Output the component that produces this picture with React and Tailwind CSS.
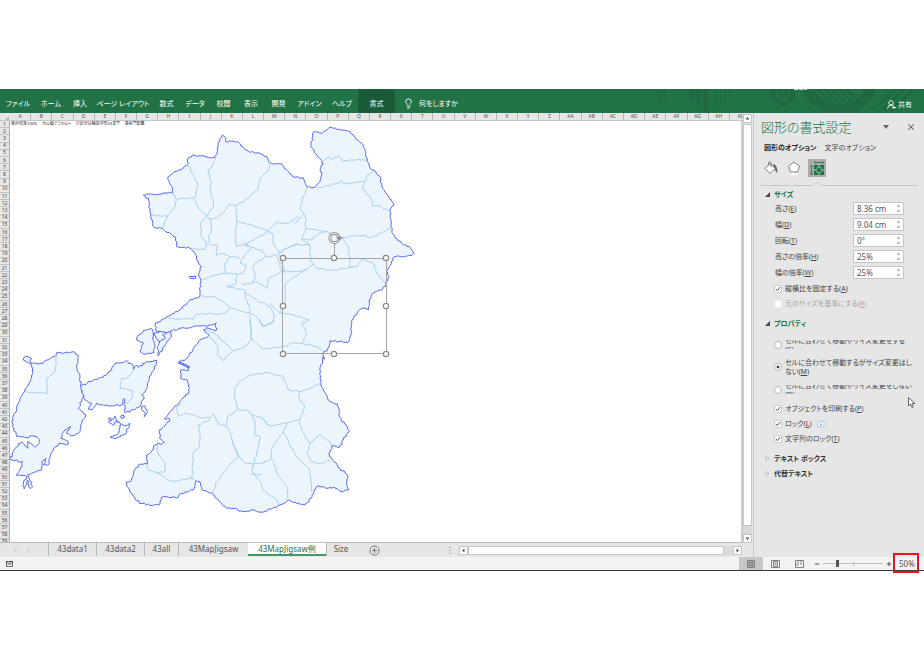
import { Minus, Plus, X, Lightbulb } from 'lucide-react';

const menus = [
    { label: 'ファイル', width: 'w-[36px]' },
    { label: 'ホーム', width: 'w-[30px]' },
    { label: '挿入', width: 'w-[28px]' },
    { label: 'ページ レイアウト', width: 'w-[58px]' },
    { label: '数式', width: 'w-[29px]' },
    { label: 'データ', width: 'w-[28px]' },
    { label: '校閲', width: 'w-[29px]' },
    { label: '表示', width: 'w-[26px]' },
    { label: '開発', width: 'w-[29px]' },
    { label: 'アドイン', width: 'w-[33px]' },
    { label: 'ヘルプ', width: 'w-[32px]' },
    { label: '書式', width: 'w-[37px]', active: true },
];

const sheets = [
    { label: '43data1', width: 'w-[48px]' },
    { label: '43data2', width: 'w-[48px]' },
    { label: '43all', width: 'w-[34px]' },
    { label: '43MapJigsaw', width: 'w-[70px]' },
    { label: '43MapJigsaw例', width: 'w-[78px]', active: true },
    { label: 'Size', width: 'w-[29px]' },
];

const sizes = [
    { id: 'height', label: '高さ', mnemonic: 'E', value: '8.36 cm' },
    { id: 'width', label: '幅', mnemonic: 'D', value: '9.04 cm' },
    { id: 'rotate', label: '回転', mnemonic: 'T', value: '0°' },
    { id: 'scaleHeight', label: '高さの倍率', mnemonic: 'H', value: '25%' },
    { id: 'scaleWidth', label: '幅の倍率', mnemonic: 'W', value: '25%' },
];

const columns = Array.from({ length: 35 }, (_, i) =>
    i < 26 ? String.fromCharCode(65 + i) : 'A' + String.fromCharCode(39 + i)
);
const rows = Array.from({ length: 59 }, (_, i) => i + 1);

// Map outlines, three units to a pixel
const mainland = '667,405 678,415 677,425 712,425 730,442 748,456 775,458 802,474 812,489 845,490 858,508 878,530 910,533 922,562 945,562 960,545 965,525 960,510 970,492 950,465 932,440 938,410 942,395 965,400 990,382 1030,390 1050,395 1068,418 1090,435 1098,460 1102,485 1110,505 1122,510 1140,530 1148,565 1160,582 1175,600 1182,615 1170,630 1173,660 1176,690 1185,712 1205,730 1228,740 1242,760 1235,766 1182,770 1175,790 1160,815 1168,830 1158,852 1145,870 1122,878 1108,900 1105,930 1085,925 1072,938 1055,962 1053,1005 1042,1028 990,1022 982,1052 967,1060 973,1078 970,1070 960,1110 962,1150 970,1172 990,1205 1013,1212 1018,1250 1035,1272 1048,1292 1030,1320 1018,1342 995,1338 988,1365 1002,1385 1020,1405 1042,1425 1040,1450 1046,1470 1030,1475 1000,1462 978,1465 955,1458 942,1475 927,1505 915,1515 890,1510 865,1500 840,1515 818,1525 790,1536 760,1530 725,1533 700,1525 680,1525 660,1505 640,1485 635,1478 610,1472 600,1445 588,1442 580,1470 540,1482 535,1492 485,1492 480,1512 450,1516 418,1510 395,1480 380,1455 378,1447 392,1445 400,1420 418,1392 442,1392 440,1365 450,1360 465,1335 493,1328 478,1315 478,1290 490,1282 510,1258 493,1256 520,1225 545,1198 568,1175 562,1140 542,1135 542,1110 565,1112 568,1102 534,1088 560,1075 580,1045 600,1020 628,1005 610,990 620,982 640,990 648,992 648,968 635,975 600,978 540,985 500,1000 470,995 465,975 500,950 540,930 565,905 600,888 602,840 595,825 605,800 590,780 585,760 570,745 530,740 528,712 490,688 460,680 452,650 445,595 430,585 518,578 515,560 503,535 520,518 538,510 562,495 562,480 577,465 615,470 645,472 652,445 658,420 667,405';

const islands = [
    '92,162 120,160 165,140 170,128 190,130 225,127 235,140 230,165 240,200 242,225 250,258 235,295 258,315 245,340 240,365 215,378 200,370 213,350 195,360 182,385 205,395 200,405 180,400 160,420 150,440 147,462 130,465 138,445 125,455 125,480 95,490 82,495 98,530 90,535 83,510 72,537 70,515 80,500 60,495 48,495 60,480 68,455 30,448 45,415 65,395 85,415 82,395 105,412 118,395 110,380 90,378 85,385 50,380 38,350 37,325 50,300 60,265 75,240 95,205 98,180 92,162',
    '92,162 82,158 70,150 72,142 85,140 95,145 90,152 92,162',
    '242,230 280,210 318,195 345,160 370,158 380,152 398,165 400,178 410,165 415,172 440,155 470,152 462,180 448,205 440,235 425,255 432,260 420,290 400,300 375,308 372,265 365,285 330,288 290,280 275,300 265,298 275,280 255,270 242,230',
    '410,90 415,75 430,62 455,55 463,70 458,90 465,110 462,128 430,132 420,125 430,98 410,90',
    '458,72 468,68 480,65 510,65 515,80 500,98 490,110 475,138 472,110 480,95 468,85 458,72',
    '480,95 495,85 488,75 500,70',
    '325,325 340,328 345,318 350,330 362,340 345,336 340,347 325,335 335,332 325,325',
    '360,345 375,347 390,340 388,350 370,375 350,385 330,382 355,370 360,345',
    '425,290 435,288 442,308 432,320 434,308 425,300 425,290',
    '362,318 370,315 374,322 366,327 362,318',
];

const borders = [
    {
        at: 'translate(390 360)', lines: [
            '175,137 190,165 203,195 195,235',
            '128,218 140,238 190,233 205,265 230,287 212,310 215,350 232,375 225,388 182,384',
            '140,238 135,260 112,290 97,325',
            '65,285 90,288 112,290',
            '255,112 250,135 235,150 242,180 240,215 250,240 250,262 230,287',
            '422,129 415,150 390,175 385,205 355,235 318,258 300,252 285,270 262,295 240,297 230,287',
            '240,297 245,330 235,350 238,372 262,375 258,405 280,400 300,410 330,415',
            '318,258 320,310 315,340 320,380 340,375 365,382 400,395 408,410',
            '320,303 345,310 380,320 412,332 440,308 475,310 505,290',
            '412,332 400,345 370,360 345,372 355,378 340,366',
            '412,332 430,345 430,370 445,395 505,370',
            '365,385 345,405 330,430 348,435 340,460 320,465 318,492 290,500 335,508 345,510',
            '300,410 285,430 287,460 250,467 212,482',
            '287,460 320,462',
            '408,410 370,435 375,475 365,490 335,495',
            '408,410 440,405 450,430 455,455 415,475 412,505 380,485 365,490',
            '345,510 345,535 358,555 360,600 365,660',
            '212,528 250,530 280,545 300,560 330,572 360,578 380,590 400,620 430,605 435,585 420,560 380,540 345,515',
            '115,595 190,598 200,582 285,580 303,562',
        ],
    },
    {
        at: 'translate(810 360)', lines: [
            '158,125 175,110 185,118 208,108 215,122 290,120',
            '140,205 200,190 215,183 222,192 285,183 292,165 312,152',
            '285,183 275,205 300,230 308,258 330,258 340,268 360,268',
            '112,202 100,230 90,265 105,285 108,325 95,358 120,375 122,420 140,445 200,452 215,445 240,443',
            '75,310 100,285',
            '108,325 130,328 165,335 215,352 285,345 300,355 330,340 362,325',
            '95,358 125,360 130,350 165,335',
            '215,352 235,380 240,443 262,440 275,418 310,430 320,460 345,487',
            '120,375 75,375 25,400 35,430 45,460',
            '130,432 100,455 45,490 45,545 30,580',
            '35,455 80,455 110,450',
            '0,550 30,580 70,585 118,600 95,610 110,640 95,670',
        ],
    },
    {
        at: 'translate(330 960)', lines: [
            '280,25 320,45 340,65 370,90 340,122 322,100 325,80 290,40',
            '370,92 400,85 425,55 422,0',
            '425,55 460,88 530,78 545,68 600,75 625,80 640,95',
            '450,0 460,18 485,10 490,0',
            '390,185 420,165 470,158 520,170 535,210 570,215 568,235 583,260 570,300 520,310 480,318 455,295 425,283 415,272 385,268 375,235 375,205 390,185',
            '570,215 600,205 632,190',
            '215,240 200,265 205,290 225,278 270,293 300,293 310,282 325,312 348,320 352,290 385,268',
            '300,300 265,315 270,350 265,385 250,400 245,475 185,485 140,458',
            '140,375 145,405 165,425 165,455 140,458 115,450 112,432',
            '245,475 260,485',
            '348,320 365,350 370,375 385,410 350,445 320,485 308,520',
            '425,283 435,310 435,345 450,350 440,400 430,433 405,430 385,405 370,370',
            '430,433 425,463 455,463',
            '430,433 455,430 485,415 505,465 535,505 530,540',
            '430,463 455,490 458,510 500,540 505,555',
            '485,415 485,385 520,335 530,310',
            '520,335 540,375 560,410 600,450 605,515',
            '568,305 580,340 600,370 590,400 605,425 630,432 660,420',
            '600,370 630,345 660,365 665,378',
        ],
    },
    {
        at: 'translate(0 930)', lines: [
            '170,135 165,185 140,205 143,250 75,245',
            '405,175 380,205 365,205 360,235 395,240 398,262 380,285',
        ],
    },
];

// Breaks straight segments into short uneven steps so they read as a coastline
const rough = (line, amount) => {
    const points = line.split(' ').map((p) => p.split(',').map(Number));
    let seed = points[0][0] + points[0][1];
    const noise = () => {
        seed = (seed * 9301 + 49297) % 233280;
        return (seed / 233280 - 0.5) * 2 * amount;
    };
    const out = [points[0]];
    for (let i = 1; i < points.length; i++) {
        const [x0, y0] = points[i - 1];
        const [x1, y1] = points[i];
        const steps = Math.max(1, Math.round(Math.hypot(x1 - x0, y1 - y0) / 6));
        for (let s = 1; s < steps; s++) {
            out.push([x0 + ((x1 - x0) * s) / steps + noise(), y0 + ((y1 - y0) * s) / steps + noise()]);
        }
        out.push([x1, y1]);
    }
    return out.map(([x, y]) => `${x.toFixed(1)},${y.toFixed(1)}`).join(' ');
};

const handles = [[283, 258], [334, 258], [386, 258], [283, 306], [386, 306], [283, 354], [334, 354], [386, 354]];

const MapShapes = () => (
    <svg className="absolute top-0 left-0 w-[731px] h-[422px]" viewBox="10 121 731 422">
        <g transform="scale(0.33333)" strokeLinejoin="round">
            <g fill="#edf5fc" stroke="#5467f2" strokeWidth="3">
                <polyline points={rough(mainland, 2.8)} />
                <polyline points="568,830 588,829 586,836 571,835 568,830" />
                <g transform="translate(0 930)">
                    {islands.map((line) => <polyline key={line} points={rough(line, 2.8)} />)}
                </g>
                <path d="M534 1088l33 17M537 1084l33 17" />
            </g>
            <g fill="none" stroke="#9fc7ea" strokeWidth="2.6">
                {borders.map((group) => (
                    <g key={group.at} transform={group.at}>
                        {group.lines.map((line) => <polyline key={line} points={rough(line, 2.2)} />)}
                    </g>
                ))}
            </g>
        </g>
        <path d="M283 258.500H386.500V353.500H282.500V258.500M334.500 258V242" fill="none" stroke="#a6a6a6" />
        {handles.map(([x, y]) => (
            <circle key={`${x}-${y}`} cx={x} cy={y} r="2.700" fill="#fff" stroke="#8a8a8a" strokeWidth="1.200" />
        ))}
        <circle cx="334.500" cy="238" r="4.600" fill="none" stroke="#8f8f8f" strokeWidth="3" />
        <circle cx="334.500" cy="238" r="4.600" fill="none" stroke="#fff" strokeWidth="1" />
        <path d="M336 237h7l-3.500 3.500z" fill="#8f8f8f" />
    </svg>
);

const RibbonArt = () => (
    <svg className="absolute top-0 right-0 w-[280px] h-[24px]" viewBox="644 89 280 24" fill="none" stroke="#1f6840">
        <path d="M653.500 89v6M656.500 89v9M660.500 89v17M664.500 89v9" strokeWidth="1.500" />
        <path d="M692 89v12M698 89v15M706 89v24" strokeWidth="5" />
        <path d="M716.500 89v20M720.500 89v16M724.500 89v13M728.500 89v9M731.500 89v6" strokeWidth="1" />
        <circle cx="783" cy="93" r="10" strokeWidth="5" />
        <circle cx="783" cy="93" r="3.500" strokeWidth="3" />
        <path d="M808 89a34 34 0 0 0 63 0" strokeWidth="10" />
        <path d="M818 89l22 22M825 89l19 19M832 89l16 16M839 89l13 13M846 89l8 8" strokeWidth="2" />
        <path d="M878 106l17-17M884 109l20-20M891 111l22-22" strokeWidth="3" />
        <path d="M794 89.500h13" stroke="#d8cfd0" strokeDasharray="4 1" />
    </svg>
);

const Section = ({ title, open, className }) => (
    <button className={`flex items-center h-[13px] pl-[4px] gap-[4px] text-[7px] font-bold ${open ? 'text-[#217346]' : 'text-[#333]'} ${className}`}>
        <svg className="w-[5px] h-[5px]" viewBox="0 0 5 5">
            {open ? <path d="M5 0v5H0z" fill="#444" /> : <path d="M1 0.500l3 2-3 2z" fill="#fff" stroke="#999" strokeWidth="0.600" />}
        </svg>
        {title}
    </button>
);

const Check = ({ label, mnemonic, checked, disabled, children }) => (
    <div className="flex items-center h-[13px] mt-[2px] pl-[13px]">
        <label className={`relative flex items-center gap-[3px] ${disabled ? 'text-[#a8a8a8]' : ''}`}>
            <input type="checkbox" defaultChecked={checked} disabled={disabled}
                className="peer appearance-none w-[8px] h-[8px] bg-white border border-[#cfcfcf] disabled:border-[#ececec]" />
            <svg className="hidden peer-checked:block absolute left-0 w-[8px] h-[8px] pointer-events-none" viewBox="0 0 8 8">
                <path d="M2 4l1.500 1.700L6.200 2" fill="none" stroke="#555" />
            </svg>
            <span>{label}(<u>{mnemonic}</u>)</span>
        </label>
        {children}
    </div>
);

const Move = ({ children, checked, clipped }) => (
    <label className={`flex items-center gap-[3px] mt-[9px] pl-[13px] ${clipped ? 'h-[9px]' : 'h-[18px]'}`}>
        <input type="radio" name="move" defaultChecked={checked}
            className="appearance-none shrink-0 w-[8px] h-[8px] rounded-full bg-white border border-[#b5b5b5] checked:bg-[radial-gradient(#444_30%,#fff_40%)]" />
        <span className="flex items-center h-full overflow-hidden leading-[9px] whitespace-nowrap">
            <span>{children}</span>
        </span>
    </label>
);

const FormatPanel = () => (
    <aside className="relative shrink-0 w-[171px] pl-[7px] bg-[#e6e6e6] border-l border-[#c6c6c6] text-[7px] text-[#444]">
        <div className="flex items-center h-[28px]">
            <h2 className="flex-1 text-[13px] text-[#217346] font-light whitespace-nowrap">図形の書式設定</h2>
            <button aria-label="オプション" className="mr-[17px]">
                <svg className="w-[6px] h-[4px]" viewBox="0 0 6 4"><path d="M0 0h6L3 4z" fill="#666" /></svg>
            </button>
            <button aria-label="閉じる" className="mr-[8px] text-[#666]"><X size={10} strokeWidth={2.5} /></button>
        </div>
        <div className="flex items-center h-[13px] pl-[3px] gap-[8px] whitespace-nowrap">
            <button className="font-bold text-[#262626]">図形のオプション</button>
            <button>文字のオプション</button>
        </div>
        <div className="flex mt-[5px] h-[18px] pl-px gap-[5px]">
            <button aria-label="塗りつぶしと線" className="w-[18px]">
                <svg className="w-[18px] h-[18px]" viewBox="0 0 18 18">
                    <path d="M3 9.500l5-5 5 5-5 5z" fill="#fff" stroke="#777" />
                    <path d="M6.500 6V3.500q1.500-2 2.500 0V8" fill="none" stroke="#777" />
                    <path d="M10.500 5q5 0 5 9-2.500-1-2.500-4.500z" fill="#666" />
                </svg>
            </button>
            <button aria-label="効果" className="w-[18px]">
                <svg className="w-[18px] h-[18px]" viewBox="0 0 18 18">
                    <path d="M9 3l5.500 4-2 6h-7l-2-6z" fill="#fff" stroke="#888" />
                    <path d="M5.500 15h7" stroke="#fff" strokeWidth="1.500" />
                </svg>
            </button>
            <button aria-label="サイズとプロパティ" className="w-[18px] bg-[#ababab]">
                <svg className="w-[18px] h-[18px]" viewBox="0 0 18 18">
                    <path d="M6 6h10v10H6z" fill="#217346" />
                    <path d="M11 6v3M11 13v3M6 11h3M13 11h3" stroke="#c5d8cc" />
                    <path d="M9 8.500v1M13 8.500v1M9 12.500v1M13 12.500v1" stroke="#fff" />
                    <path d="M7 3.500h8M7 2v3M15 2v3M3.500 7v8M2 7h3M2 15h3" fill="none" stroke="#217346" strokeWidth="0.800" />
                </svg>
            </button>
        </div>
        <svg className="block w-[157px] h-[9px]" viewBox="0 0 157 9">
            <path d="M0 8.500h52l4-4 4 4h97" fill="none" stroke="#c4c4c4" />
        </svg>

        <Section title="サイズ" open className="mt-[2px]" />
        <div className="mt-px mb-[3px] pl-[14px] pr-[20px] flex flex-col gap-[3px]">
            {sizes.map((data) => (
                <div key={data.id} className="flex items-center justify-between h-[13px]">
                    <label htmlFor={data.id}>{data.label}(<u>{data.mnemonic}</u>)</label>
                    <div className="flex items-center w-[51px] h-[13px] bg-white border border-[#c6c6c6]">
                        <input id={data.id} defaultValue={data.value} className="w-[42px] h-full pl-[3px] text-[8px] text-[#555] outline-none" />
                        <svg className="w-[5px] h-[9px]" viewBox="0 0 5 9">
                            <path d="M1 2.500L2.500 1 4 2.500zM1 6.500L2.500 8 4 6.500z" fill="#666" />
                        </svg>
                    </div>
                </div>
            ))}
        </div>
        <Check label="縦横比を固定する" mnemonic="A" checked />
        <Check label="元のサイズを基準にする" mnemonic="R" disabled />

        <Section title="プロパティ" open className="mt-[7px] mb-[10px]" />
        <Move clipped>セルに合わせて移動やサイズ変更をする<br />(<u>C</u>)</Move>
        <Move checked>セルに合わせて移動するがサイズ変更はし<br />ない(<u>M</u>)</Move>
        <Move clipped>セルに合わせて移動やサイズ変更をしない<br />(<u>D</u>)</Move>
        <div className="mt-[8px]">
            <Check label="オブジェクトを印刷する" mnemonic="P" checked />
            <Check label="ロック" mnemonic="L" checked>
                <svg className="ml-[5px] w-[8px] h-[8px]" viewBox="0 0 8 8">
                    <circle cx="4" cy="4" r="3.400" fill="#fff" stroke="#8db8e0" strokeWidth="0.800" />
                    <path d="M4 3.500v2.500M4 2v0.800" stroke="#3f87cc" />
                </svg>
            </Check>
            <Check label="文字列のロック" mnemonic="T" checked />
        </div>
        <Section title="テキスト ボックス" className="mt-[7px]" />
        <Section title="代替テキスト" className="mt-[2px]" />

        <svg className="absolute left-[154px] top-[284px] w-[8px] h-[11px]" viewBox="0 0 8 11">
            <path d="M0.500 0.500v8.500l2-2 1.500 3.500 1.300-0.600L4 6.500h3z" fill="#fff" stroke="#444" strokeWidth="0.800" />
        </svg>
    </aside>
);

const Arrow = ({ d, label }) => (
    <button aria-label={label} className="shrink-0 flex items-center justify-center w-[9px] h-[9px] bg-white border border-[#c6c6c6]">
        <svg className="w-[5px] h-[5px]" viewBox="0 0 5 5"><path d={d} fill="#555" /></svg>
    </button>
);

const App = () => {
    return (
        <div className="min-h-screen bg-white py-[89px] leading-none font-['Noto_Sans','Noto_Sans_CJK_JP',sans-serif] [font-feature-settings:'palt']">
            {/* RIBBON */}
            <header className="relative flex h-[24px] bg-[#217346] text-white text-[7px] overflow-hidden">
                <RibbonArt />
                <nav className="flex">
                    {menus.map((menu) => (
                        <button key={menu.label}
                            className={`pt-[5px] whitespace-nowrap ${menu.width} ${menu.active ? 'bg-[#1b5c38]' : ''}`}>
                            {menu.label}
                        </button>
                    ))}
                </nav>
                <button className="flex items-center gap-[5px] pt-[5px] pl-[8px] whitespace-nowrap">
                    <Lightbulb size={11} strokeWidth={2} />
                    何をしますか
                </button>
                <button className="relative flex items-center gap-[2px] pt-[6px] ml-auto mr-[12px]">
                    <svg className="w-[9px] h-[9px]" viewBox="0 0 9 9" fill="none" stroke="#fff" strokeWidth="0.900">
                        <circle cx="4" cy="2.800" r="2.200" />
                        <path d="M0.500 8.500q0.300-3.300 3.500-3.300 1.200 0 2 0.600M5 7.500h4M7 5.500v3.500" />
                    </svg>
                    共有
                </button>
            </header>

            <div className="flex">
                <main className="flex-1 min-w-0 bg-[#e6e6e6]">
                    <div className="flex">
                        {/* GRID */}
                        <div className="flex-1 min-w-0 overflow-hidden">
                            <div className="flex h-[8px] bg-[#e6e6e6] border-b border-[#c6c6c6] text-[5px] text-[#555]">
                                <div className="shrink-0 w-[10px] flex justify-end items-end pr-px">
                                    <svg className="w-[4px] h-[4px]" viewBox="0 0 4 4"><path d="M4 0v4H0z" fill="#b8b8b8" /></svg>
                                </div>
                                <div className="shrink-0 flex w-[741px]">
                                    {columns.map((column) => (
                                        <div key={column} className="flex-1 flex items-center justify-center border-r border-[#b8b8b8]">{column}</div>
                                    ))}
                                </div>
                            </div>
                            <div className="flex h-[422px] overflow-hidden border-b border-[#bdbdbd]">
                                <div className="shrink-0 flex flex-col w-[10px] h-[425px] bg-[#e6e6e6] border-r border-[#b0b0b0] text-[5px] text-[#444]">
                                    {rows.map((row) => (
                                        <div key={row} className="flex-1 min-h-0 flex items-center justify-center border-b border-[#c2c2c2]">{row}</div>
                                    ))}
                                </div>
                                <div className="relative flex-1 bg-white overflow-hidden border-r-2 border-[#cdcdcd]">
                                    <p className="pt-px pl-px text-[4px] text-[#222] whitespace-nowrap">
                                        表示倍率100%　 セル幅デフォルト　 行区分は縮放字形03まで　 事前で配置
                                    </p>
                                    <MapShapes />
                                </div>
                            </div>
                        </div>
                        <div className="shrink-0 flex flex-col w-[10px] pt-px">
                            <Arrow label="上へ" d="M0.500 3.500h4l-2-2.500z" />
                            <div className="flex-1 w-[9px] mt-px pb-[8px] bg-[#d9d9d9]">
                                <div className="h-full bg-white border border-[#c6c6c6]" />
                            </div>
                            <Arrow label="下へ" d="M0.500 1.500h4l-2 2.500z" />
                        </div>
                    </div>

                    {/* SHEET TABS */}
                    <div className="flex h-[14px] text-[8px] text-[#555]">
                        <div className="flex items-center justify-center gap-[10px] w-[48px] pr-[4px] text-[#b5b5b5]">
                            <span>‹</span>
                            <span>›</span>
                        </div>
                        {sheets.map((sheet) => (
                            <button key={sheet.label}
                                className={`h-[13px] whitespace-nowrap ${sheet.width} ${sheet.active ? 'bg-white text-[#217346] border-b-2 border-[#3f9a68]' : 'pb-[2px] border-l border-[#b8b8b8]'}`}>
                                {sheet.label}
                            </button>
                        ))}
                        <button aria-label="新しいシート" className="pl-[14px]">
                            <svg className="w-[11px] h-[11px]" viewBox="0 0 11 11" fill="none" stroke="#777">
                                <circle cx="5.500" cy="5.500" r="4.500" />
                                <path d="M5.500 3v5M3 5.500h5" />
                            </svg>
                        </button>
                        <div className="flex flex-1 items-center justify-end pr-[11px]">
                            <svg className="mr-[8px] w-[2px] h-[7px]" viewBox="0 0 2 7">
                                <path d="M1 0v7" stroke="#999" strokeWidth="1.500" strokeDasharray="1 2" />
                            </svg>
                            <Arrow label="左へ" d="M3.500 0.500v4L1 2.500z" />
                            <div className="w-[265px] h-[9px] pr-[9px] bg-[#d9d9d9]">
                                <div className="h-full bg-white border border-[#c6c6c6]" />
                            </div>
                            <Arrow label="右へ" d="M1.500 0.500v4L4 2.500z" />
                        </div>
                    </div>
                </main>

                <FormatPanel />
            </div>

            {/* STATUS BAR */}
            <footer className="flex items-center h-[14px] bg-[#f3f3f3] border-b border-[#3a3a44] text-[#555]">
                <svg className="ml-[6px] w-[7px] h-[7px]" viewBox="0 0 7 7">
                    <path d="M0.500 2v4.500h6V2z" fill="#fff" stroke="#555" strokeWidth="0.900" />
                    <path d="M0 1.500h2M3 1.500h4M1.500 4h4" stroke="#444" strokeWidth="1.200" />
                </svg>
                <button aria-label="標準" className="flex items-center justify-center w-[24px] h-full ml-auto bg-[#c6c6c6]">
                    <svg className="w-[8px] h-[8px]" viewBox="0 0 8 8" fill="none" stroke="#777" strokeWidth="0.900">
                        <path d="M0.500 0.500h7v7h-7zM0.500 2.800h7M0.500 5.200h7M2.800 0.500v7M5.200 0.500v7" />
                    </svg>
                </button>
                <button aria-label="ページ レイアウト" className="flex items-center justify-center w-[24px] h-full">
                    <svg className="w-[9px] h-[8px]" viewBox="0 0 9 8" fill="none" stroke="#777" strokeWidth="0.900">
                        <path d="M0.500 0.500h8v7h-8zM2.500 1.500h4v5h-4zM3.500 3h2M3.500 4.500h2" />
                    </svg>
                </button>
                <button aria-label="改ページ プレビュー" className="flex items-center justify-center w-[24px] h-full">
                    <svg className="w-[9px] h-[8px]" viewBox="0 0 9 8" fill="none" stroke="#777" strokeWidth="0.900">
                        <path d="M0.500 0.500h8v7h-8zM3 0.500v4.500M6 0.500v4.500M3 5h-2.500" />
                    </svg>
                </button>
                <button aria-label="縮小" className="ml-[3px]"><Minus size={6} strokeWidth={4} /></button>
                <input type="range" aria-label="ズーム" min="10" max="190" defaultValue="50"
                    className="appearance-none w-[60px] h-[8px] mx-[3px] bg-[linear-gradient(#c0c0c0,#c0c0c0),linear-gradient(#c0c0c0,#c0c0c0)] bg-[length:100%_1px,1px_4px] bg-center bg-no-repeat [&::-webkit-slider-thumb]:appearance-none [&::-webkit-slider-thumb]:w-[3px] [&::-webkit-slider-thumb]:h-[7px] [&::-webkit-slider-thumb]:bg-[#555]" />
                <button aria-label="拡大"><Plus size={6} strokeWidth={4} /></button>
                <button className="relative w-[32px] pl-[7px] text-left text-[8px]">
                    50%
                    <span className="absolute left-px -top-[7px] w-[26px] h-[20px] border-2 border-[#e81420]" />
                </button>
            </footer>
        </div>
    );
};

export default App;
